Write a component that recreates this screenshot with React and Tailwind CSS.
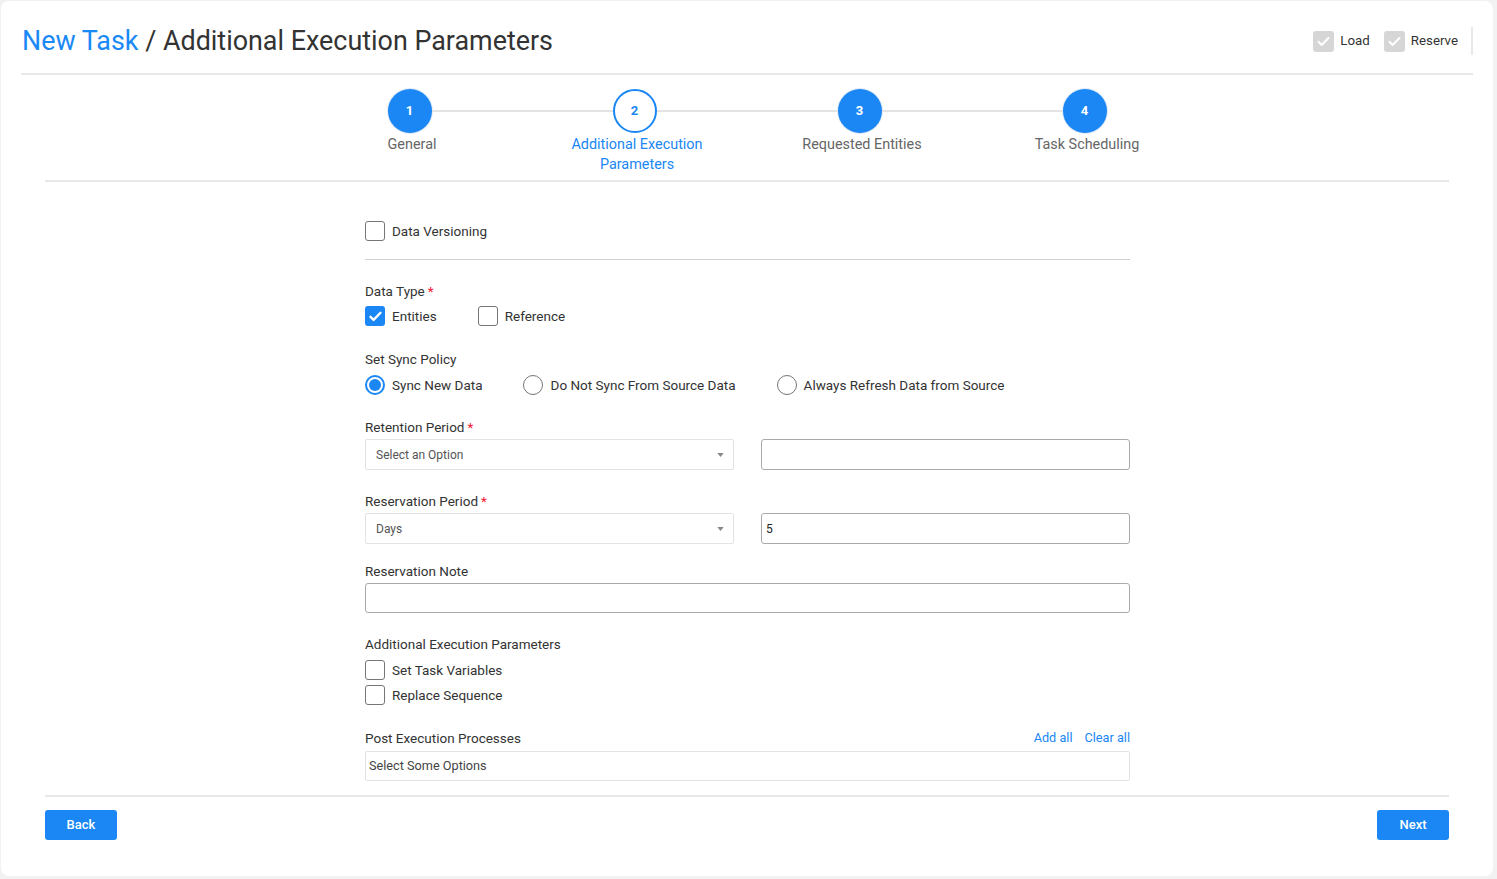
function Check({ checked, muted }) {
  if (muted) {
    return (
      <span className="shrink-0 w-[21px] h-[21px] rounded-[3px] bg-[#d6d6d6] flex items-center justify-center">
        <svg width="15" height="15" viewBox="0 0 24 24" fill="none" stroke="#fff" strokeWidth="3.2" strokeLinecap="round" strokeLinejoin="round">
          <path d="M4 12.5l5 5L20 6.5" />
        </svg>
      </span>
    );
  }
  if (checked) {
    return (
      <span className="shrink-0 w-5 h-5 rounded-[3px] bg-[#1a87f4] flex items-center justify-center">
        <svg width="15" height="15" viewBox="0 0 24 24" fill="none" stroke="#fff" strokeWidth="3.8" strokeLinecap="round" strokeLinejoin="round">
          <path d="M4 12.5l5 5L20 6" />
        </svg>
      </span>
    );
  }
  return <span className="shrink-0 block w-5 h-5 rounded-[3px] border border-[#767676] bg-white" />;
}

function Radio({ checked }) {
  if (checked) {
    return (
      <span className="shrink-0 w-5 h-5 rounded-full border-2 border-[#1a87f4] flex items-center justify-center">
        <span className="w-3 h-3 rounded-full bg-[#1a87f4]" />
      </span>
    );
  }
  return <span className="shrink-0 block w-5 h-5 rounded-full border border-[#767676] bg-white" />;
}

function Label({ children, required, className = "" }) {
  return (
    <div className={`text-[13.5px] leading-5 text-[#333] ${className}`}>
      {children}
      {required && <span className="text-[#f0142f] ml-[3px]">*</span>}
    </div>
  );
}

function Select({ value }) {
  return (
    <div className="w-[369px] h-[31px] border border-[#e3e3e3] rounded-[2px] flex items-center justify-between pl-[10px] pr-[9px] text-xs text-[#555]">
      <span>{value}</span>
      <svg width="7" height="4" viewBox="0 0 8 5">
        <path d="M0 0h8L4 5z" fill="#888" />
      </svg>
    </div>
  );
}

const steps = [
  { n: 1, label: "General" },
  { n: 2, label: "Additional Execution Parameters", active: true },
  { n: 3, label: "Requested Entities" },
  { n: 4, label: "Task Scheduling" },
];

export default function App() {
  return (
    <div className="min-h-screen bg-[#f2f2f2] pt-px pl-px pr-1 pb-[3px]" style={{ fontFamily: "Roboto, 'Liberation Sans', sans-serif" }}>
      <div className="bg-white rounded-lg px-5 h-[875px] flex flex-col">
        <div className="h-[74px] shrink-0 flex items-center justify-between border-b-2 border-[#e8e8e8] pt-[8px]">
          <h1 className="text-[26.9px] leading-8 text-[#333] pl-px">
            <span className="text-[#1a89f5]">New Task</span> / Additional Execution Parameters
          </h1>
          <div className="flex items-center">
            <Check muted />
            <span className="ml-[6px] text-[13.3px] text-[#333]">Load</span>
            <span className="ml-[14px]"><Check muted /></span>
            <span className="ml-[6px] text-[13.3px] text-[#333]">Reserve</span>
            <span className="ml-[13px] w-[2px] h-7 bg-[#e8e8e8]" />
          </div>
        </div>

        <div className="px-6 flex-1 flex flex-col">
          <div className="h-[107px] shrink-0 pt-[14px] border-b-2 border-[#e8e8e8] flex justify-center">
            {steps.map((s, i) => (
              <div key={s.n} className="w-[225px] flex flex-col items-center">
                <div className="w-full flex items-center h-11">
                  <span className={`flex-1 h-[2px] ${i > 0 ? "bg-[#e3e3e3]" : ""}`} />
                  <span
                    className={`w-11 h-11 rounded-full flex items-center justify-center text-[13px] font-bold ${
                      s.active
                        ? "border-2 border-[#1a87f4] bg-white text-[#1a87f4]"
                        : "bg-[#1a87f4] text-white ring-1 ring-[#dfe9f5]"
                    }`}
                  >
                    {s.n}
                  </span>
                  <span className={`flex-1 h-[2px] ${i < 3 ? "bg-[#e3e3e3]" : ""}`} />
                </div>
                <div
                  className={`mt-[2px] ml-[5px] max-w-[150px] text-center text-[14.4px] leading-5 ${
                    s.active ? "text-[#1a87f4]" : "text-[#666]"
                  }`}
                >
                  {s.label}
                </div>
              </div>
            ))}
          </div>

          <div className="w-[765px] ml-[320px] pt-[39px]">
            <div className="flex items-center gap-[7px] h-5">
              <Check />
              <span className="text-[13.5px] text-[#333]">Data Versioning</span>
            </div>
            <div className="mt-[18px] border-t border-[#cfcfcf]" />

            <Label required className="mt-[21px]">Data Type</Label>
            <div className="mt-[5px] flex items-center h-5">
              <Check checked />
              <span className="ml-[7px] text-[13.5px] text-[#333]">Entities</span>
              <span className="ml-[41px]"><Check /></span>
              <span className="ml-[7px] text-[13.5px] text-[#333]">Reference</span>
            </div>

            <Label className="mt-[23px]">Set Sync Policy</Label>
            <div className="mt-[6px] flex items-center h-5 text-[13.5px] text-[#333]">
              <Radio checked />
              <span className="ml-[7px]">Sync New Data</span>
              <span className="ml-[40px]"><Radio /></span>
              <span className="ml-[8px]">Do Not Sync From Source Data</span>
              <span className="ml-[41px]"><Radio /></span>
              <span className="ml-[7px]">Always Refresh Data from Source</span>
            </div>

            <Label required className="mt-[22px]">Retention Period</Label>
            <div className="mt-[2px] flex justify-between">
              <Select value="Select an Option" />
              <div className="w-[369px] h-[31px] border border-[#aaa] rounded-[3px]" />
            </div>

            <Label required className="mt-[21px]">Reservation Period</Label>
            <div className="mt-[2px] flex justify-between">
              <Select value="Days" />
              <div className="w-[369px] h-[31px] border border-[#aaa] rounded-[3px] flex items-center pl-[4px] text-xs text-[#222]">5</div>
            </div>

            <Label className="mt-[17px]">Reservation Note</Label>
            <div className="mt-[2px] h-[30px] border border-[#aaa] rounded-[3px]" />

            <Label className="mt-[21px]">Additional Execution Parameters</Label>
            <div className="mt-[6px] flex items-center gap-[7px] h-5">
              <Check />
              <span className="text-[13.5px] text-[#333]">Set Task Variables</span>
            </div>
            <div className="mt-[5px] flex items-center gap-[7px] h-5">
              <Check />
              <span className="text-[13.5px] text-[#333]">Replace Sequence</span>
            </div>

            <div className="mt-[23px] flex items-center justify-between">
              <Label>Post Execution Processes</Label>
              <div className="flex gap-[12px] text-[12.7px] text-[#1a87f4]">
                <span>Add all</span>
                <span>Clear all</span>
              </div>
            </div>
            <div className="mt-[3px] h-[30px] border border-[#e3e3e3] rounded-[2px] flex items-center pl-[3px] text-[12.7px] text-[#444]">
              Select Some Options
            </div>
          </div>

          <div className="mt-[14px] border-t-2 border-[#e8e8e8]" />
          <div className="mt-[13px] flex justify-between">
            <button className="w-[72px] h-[30px] rounded-[3px] bg-[#1a87f4] text-white text-[13px] font-medium">Back</button>
            <button className="w-[72px] h-[30px] rounded-[3px] bg-[#1a87f4] text-white text-[13px] font-medium">Next</button>
          </div>
        </div>
      </div>
    </div>
  );
}
